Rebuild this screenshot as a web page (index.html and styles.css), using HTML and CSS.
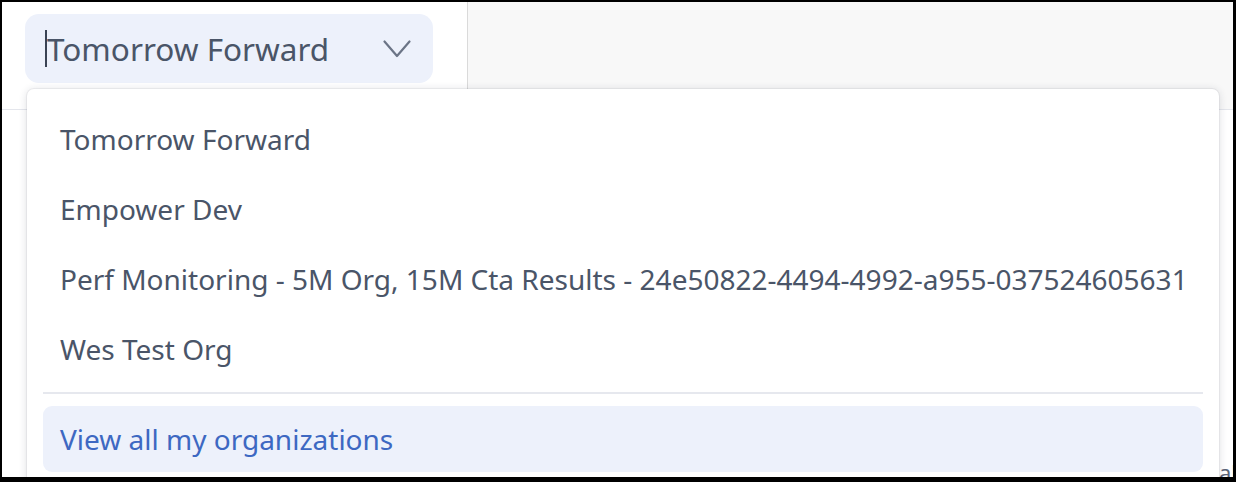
FILE: index.html
```html
<!DOCTYPE html>
<html lang="en">
<head>
<meta charset="utf-8">
<title>Organization switcher</title>
<link rel="stylesheet" href="styles.css">
</head>
<body>
<div class="frame">
  <header class="topbar">
    <div class="org-col">
      <button class="org-select" type="button">
        <span class="caret"></span>
        <span class="org-name">Tomorrow Forward</span>
        <svg class="chevron" width="28" height="18" viewBox="0 0 28 18" aria-hidden="true">
          <polyline points="1.5,1.5 14,16 26.5,1.5" fill="none" stroke="#6b7486" stroke-width="2.2" stroke-linecap="round" stroke-linejoin="round"/>
        </svg>
      </button>
    </div>
    <div class="topbar-rest"></div>
  </header>
  <main class="content">
    <span class="peek">Total</span>
  </main>
  <div class="dropdown">
    <ul class="org-list">
      <li class="org-item">Tomorrow Forward</li>
      <li class="org-item">Empower Dev</li>
      <li class="org-item">Perf Monitoring - 5M Org, 15M Cta Results - 24e50822-4494-4992-a955-037524605631</li>
      <li class="org-item">Wes Test Org</li>
    </ul>
    <div class="separator"></div>
    <a class="view-all" href="#">View all my organizations</a>
  </div>
</div>
</body>
</html>
```
FILE: styles.css
```css
* { box-sizing: border-box; }
html, body { margin: 0; padding: 0; }
body {
  font-family: "Noto Sans", "Open Sans", sans-serif;
  background: #000;
}
.frame {
  position: relative;
  height: 482px;
  border-style: solid;
  border-color: #000;
  border-width: 2px 3px 5px 2px;
  background: #fff;
  display: flex;
  flex-direction: column;
  overflow: hidden;
}
.topbar {
  display: grid;
  grid-template-columns: 466px 1fr;
  height: 108px;
  border-bottom: 1px solid #e4e6ec;
  flex: none;
}
.org-col {
  background: #fff;
  border-right: 1px solid #dadada;
  padding: 12px 0 0 23px;
}
.topbar-rest {
  background: #f8f8f8;
}
.org-select {
  display: flex;
  align-items: center;
  width: 408px;
  height: 69px;
  padding: 0 22px 0 20px;
  border: none;
  border-radius: 14px;
  background: #edf1fb;
  font-family: inherit;
  cursor: pointer;
}
.caret {
  width: 2px;
  height: 37px;
  background: #3a4354;
  margin-right: 0;
  flex: none;
}
.org-name {
  font-size: 31.5px;
  color: #4a5568;
  line-height: 1;
  flex: 1;
  text-align: left;
  margin-left: 0;
}
.chevron { flex: none; }
.content {
  flex: 1;
  position: relative;
  background: #fff;
  display: flex;
  justify-content: flex-end;
  align-items: flex-end;
  padding: 0 0 0 0;
}
.peek {
  font-size: 22px;
  color: #5b6478;
  line-height: 1;
  margin-right: -4px;
  margin-bottom: -6px;
}
.dropdown {
  position: absolute;
  left: 25px;
  top: 87px;
  width: 1192px;
  bottom: -20px;
  background: #fff;
  border-radius: 7px;
  box-shadow: 0 1px 8px rgba(30, 40, 60, 0.16), 0 0 0 1px rgba(30, 40, 60, 0.05);
  padding: 15px 16px 0 16px;
}
.org-list {
  list-style: none;
  margin: 0;
  padding: 0;
}
.org-item {
  height: 70px;
  display: flex;
  align-items: center;
  padding-left: 17px;
  font-size: 28px;
  color: #4a5568;
  white-space: nowrap;
}
.separator {
  margin-top: 8px;
  height: 2px;
  background: #e6e8ee;
}
.view-all {
  display: flex;
  align-items: center;
  margin-top: 12px;
  height: 66px;
  padding-left: 17px;
  border-radius: 9px;
  background: #edf1fb;
  color: #3d68c2;
  font-size: 28px;
  text-decoration: none;
}
```
